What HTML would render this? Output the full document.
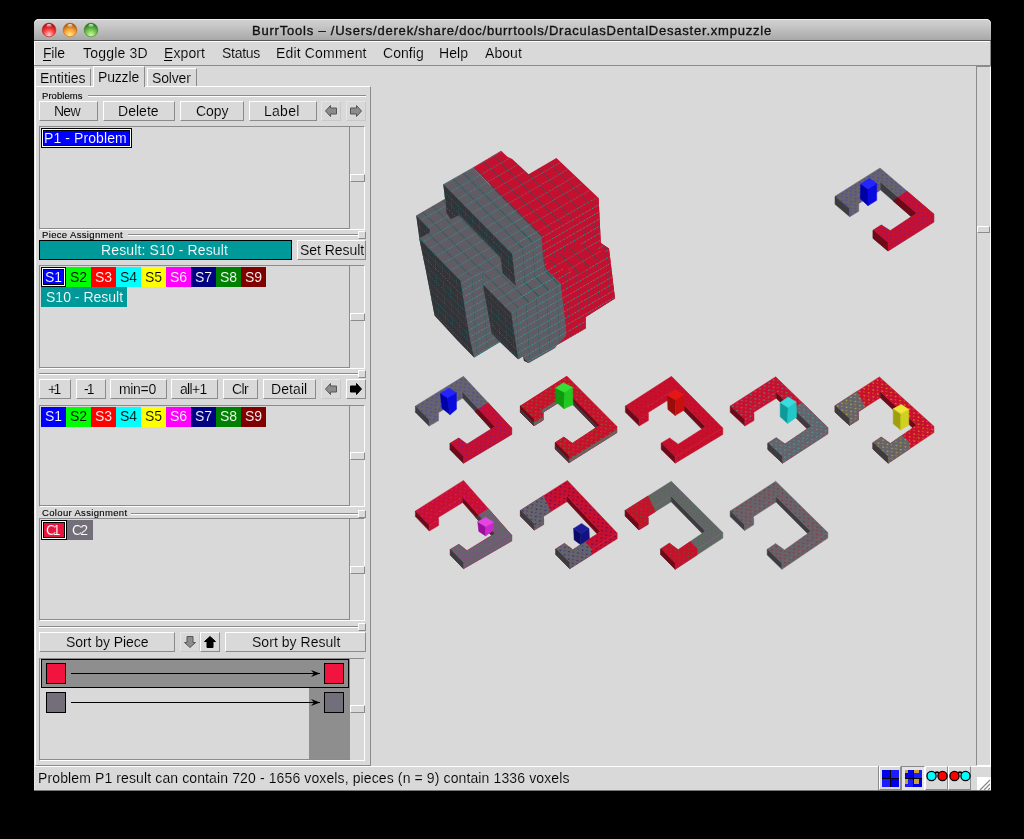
<!DOCTYPE html>
<html><head><meta charset="utf-8"><style>
html,body{margin:0;padding:0;}
body{width:1024px;height:839px;background:#000;position:relative;overflow:hidden;font-family:"Liberation Sans",sans-serif;}
body div{position:absolute;will-change:transform;}
svg{position:absolute;}
</style></head><body>
<div style="left:34px;top:19px;width:957px;height:772px;background:#d9d9d9;border-radius:5px 5px 0 0;overflow:hidden"></div>
<div style="left:34px;top:19px;width:957px;height:21px;background:linear-gradient(#d2d2d2,#c6c6c6 35%,#a8a8a8);border-radius:5px 5px 0 0;box-shadow:inset 0 1px 0 #ebebeb"></div>
<div style="left:34px;top:40px;width:957px;height:1px;background:#555"></div>
<svg style="left:41px;top:22px" width="16" height="16" viewBox="-8 -8 16 16">
<defs><radialGradient id="tl0" cx="50%" cy="85%" r="75%"><stop offset="0" stop-color="#ffd0d0"/><stop offset="0.55" stop-color="#ff3a3a"/><stop offset="1" stop-color="#a81818"/></radialGradient>
<linearGradient id="th0" x1="0" y1="0" x2="0" y2="1"><stop offset="0" stop-color="#fff" stop-opacity="0.95"/><stop offset="1" stop-color="#fff" stop-opacity="0"/></linearGradient></defs>
<circle cx="0" cy="0" r="7.6" fill="#dcdcdc" opacity="0.5"/>
<circle cx="0" cy="0" r="6.9" fill="url(#tl0)" stroke="#a81818" stroke-width="0.6"/>
<ellipse cx="0" cy="-4.3" rx="2.6" ry="1.7" fill="url(#th0)"/></svg>
<svg style="left:62px;top:22px" width="16" height="16" viewBox="-8 -8 16 16">
<defs><radialGradient id="tl1" cx="50%" cy="85%" r="75%"><stop offset="0" stop-color="#ffea90"/><stop offset="0.55" stop-color="#f8a236"/><stop offset="1" stop-color="#b05c12"/></radialGradient>
<linearGradient id="th1" x1="0" y1="0" x2="0" y2="1"><stop offset="0" stop-color="#fff" stop-opacity="0.95"/><stop offset="1" stop-color="#fff" stop-opacity="0"/></linearGradient></defs>
<circle cx="0" cy="0" r="7.6" fill="#dcdcdc" opacity="0.5"/>
<circle cx="0" cy="0" r="6.9" fill="url(#tl1)" stroke="#b05c12" stroke-width="0.6"/>
<ellipse cx="0" cy="-4.3" rx="2.6" ry="1.7" fill="url(#th1)"/></svg>
<svg style="left:83px;top:22px" width="16" height="16" viewBox="-8 -8 16 16">
<defs><radialGradient id="tl2" cx="50%" cy="85%" r="75%"><stop offset="0" stop-color="#d4f4a8"/><stop offset="0.55" stop-color="#6cc04c"/><stop offset="1" stop-color="#2e7e1e"/></radialGradient>
<linearGradient id="th2" x1="0" y1="0" x2="0" y2="1"><stop offset="0" stop-color="#fff" stop-opacity="0.95"/><stop offset="1" stop-color="#fff" stop-opacity="0"/></linearGradient></defs>
<circle cx="0" cy="0" r="7.6" fill="#dcdcdc" opacity="0.5"/>
<circle cx="0" cy="0" r="6.9" fill="url(#tl2)" stroke="#2e7e1e" stroke-width="0.6"/>
<ellipse cx="0" cy="-4.3" rx="2.6" ry="1.7" fill="url(#th2)"/></svg>
<div style="left:252.00px;top:24.00px;font-size:13px;line-height:13px;color:#111;white-space:pre;letter-spacing:0.786px;font-family:'Liberation Sans';-webkit-text-stroke:0.35px #111">BurrTools – /Users/derek/share/doc/burrtools/DraculasDentalDesaster.xmpuzzle</div>
<div style="left:34px;top:41px;width:957px;height:1px;background:#fff"></div>
<div style="left:34px;top:65px;width:957px;height:1px;background:#8b8b8b"></div>
<div style="left:990px;top:41px;width:1px;height:25px;background:#8b8b8b"></div>
<div style="left:34px;top:41px;width:1px;height:24px;background:#fff"></div>
<div style="left:34px;top:66px;width:1px;height:724px;background:#e6e6e6"></div>
<div style="left:42.80px;top:46.15px;font-size:14px;line-height:14px;color:#000;white-space:pre;letter-spacing:-0.191px;font-family:'Liberation Sans';;-webkit-text-stroke:0.14px #d9d9d9">File</div>
<div style="left:82.70px;top:46.15px;font-size:14px;line-height:14px;color:#000;white-space:pre;letter-spacing:0.209px;font-family:'Liberation Sans';;-webkit-text-stroke:0.14px #d9d9d9">Toggle 3D</div>
<div style="left:163.50px;top:46.15px;font-size:14px;line-height:14px;color:#000;white-space:pre;letter-spacing:0.086px;font-family:'Liberation Sans';;-webkit-text-stroke:0.14px #d9d9d9">Export</div>
<div style="left:221.70px;top:46.15px;font-size:14px;line-height:14px;color:#000;white-space:pre;letter-spacing:-0.278px;font-family:'Liberation Sans';;-webkit-text-stroke:0.14px #d9d9d9">Status</div>
<div style="left:276.40px;top:46.15px;font-size:14px;line-height:14px;color:#000;white-space:pre;letter-spacing:0.163px;font-family:'Liberation Sans';;-webkit-text-stroke:0.14px #d9d9d9">Edit Comment</div>
<div style="left:383.40px;top:46.15px;font-size:14px;line-height:14px;color:#000;white-space:pre;letter-spacing:0.063px;font-family:'Liberation Sans';;-webkit-text-stroke:0.14px #d9d9d9">Config</div>
<div style="left:439.00px;top:46.15px;font-size:14px;line-height:14px;color:#000;white-space:pre;letter-spacing:0.098px;font-family:'Liberation Sans';;-webkit-text-stroke:0.14px #d9d9d9">Help</div>
<div style="left:484.90px;top:46.15px;font-size:14px;line-height:14px;color:#000;white-space:pre;letter-spacing:0.051px;font-family:'Liberation Sans';;-webkit-text-stroke:0.14px #d9d9d9">About</div>
<div style="left:43px;top:60px;width:8px;height:1px;background:#000"></div>
<div style="left:164px;top:60px;width:8px;height:1px;background:#000"></div>
<div style="left:35px;top:86px;width:336px;height:680px;box-sizing:border-box;border-top:1px solid #fff;border-left:1px solid #fff;border-right:1px solid #8b8b8b;border-bottom:1px solid #8b8b8b"></div>
<div style="left:35px;top:68px;width:56px;height:18px;box-sizing:border-box;border-top:1px solid #fff;border-left:1px solid #fff;border-right:1px solid #8b8b8b"></div>
<div style="left:93px;top:66px;width:52px;height:21px;background:#d9d9d9;box-sizing:border-box;border-top:1px solid #fff;border-left:1px solid #fff;border-right:1px solid #8b8b8b"></div>
<div style="left:147px;top:68px;width:50px;height:18px;box-sizing:border-box;border-top:1px solid #fff;border-left:1px solid #fff;border-right:1px solid #8b8b8b"></div>
<div style="left:39.80px;top:70.55px;font-size:14px;line-height:14px;color:#000;white-space:pre;letter-spacing:-0.059px;font-family:'Liberation Sans';;-webkit-text-stroke:0.14px #d9d9d9">Entities</div>
<div style="left:97.60px;top:69.75px;font-size:14px;line-height:14px;color:#000;white-space:pre;letter-spacing:-0.167px;font-family:'Liberation Sans';;-webkit-text-stroke:0.14px #d9d9d9">Puzzle</div>
<div style="left:152.30px;top:70.55px;font-size:14px;line-height:14px;color:#000;white-space:pre;letter-spacing:-0.164px;font-family:'Liberation Sans';;-webkit-text-stroke:0.14px #d9d9d9">Solver</div>
<div style="left:42.00px;top:91.26px;font-size:9.5px;line-height:9.5px;color:#000;white-space:pre;letter-spacing:0.061px;font-family:'Liberation Sans';-webkit-text-stroke:0.12px #000">Problems</div>
<div style="left:88px;top:95px;width:278px;height:1px;background:#8b8b8b"></div>
<div style="left:88px;top:96px;width:278px;height:1px;background:#fff"></div>
<div style="left:39px;top:101px;width:59px;height:20px;background:#d9d9d9;box-sizing:border-box;border-top:1px solid #fff;border-left:1px solid #fff;border-right:1px solid #8b8b8b;border-bottom:1px solid #8b8b8b"></div>
<div style="left:53.60px;top:104.15px;font-size:14px;line-height:14px;color:#000;white-space:pre;letter-spacing:-0.748px;font-family:'Liberation Sans';;-webkit-text-stroke:0.14px #d9d9d9">New</div>
<div style="left:103px;top:101px;width:72px;height:20px;background:#d9d9d9;box-sizing:border-box;border-top:1px solid #fff;border-left:1px solid #fff;border-right:1px solid #8b8b8b;border-bottom:1px solid #8b8b8b"></div>
<div style="left:117.50px;top:104.15px;font-size:14px;line-height:14px;color:#000;white-space:pre;letter-spacing:0.023px;font-family:'Liberation Sans';;-webkit-text-stroke:0.14px #d9d9d9">Delete</div>
<div style="left:180px;top:101px;width:64px;height:20px;background:#d9d9d9;box-sizing:border-box;border-top:1px solid #fff;border-left:1px solid #fff;border-right:1px solid #8b8b8b;border-bottom:1px solid #8b8b8b"></div>
<div style="left:195.60px;top:104.15px;font-size:14px;line-height:14px;color:#000;white-space:pre;letter-spacing:-0.094px;font-family:'Liberation Sans';;-webkit-text-stroke:0.14px #d9d9d9">Copy</div>
<div style="left:249px;top:101px;width:68px;height:20px;background:#d9d9d9;box-sizing:border-box;border-top:1px solid #fff;border-left:1px solid #fff;border-right:1px solid #8b8b8b;border-bottom:1px solid #8b8b8b"></div>
<div style="left:264.40px;top:104.15px;font-size:14px;line-height:14px;color:#000;white-space:pre;letter-spacing:0.264px;font-family:'Liberation Sans';;-webkit-text-stroke:0.14px #d9d9d9">Label</div>
<div style="left:321px;top:101px;width:20px;height:20px;background:#d9d9d9;box-sizing:border-box;border-top:1px solid #e6e6e6;border-left:1px solid #e6e6e6;border-right:1px solid #c8c8c8;border-bottom:1px solid #c8c8c8"></div>
<svg style="left:323.0px;top:103.0px" width="16" height="16" viewBox="-8 -8 16 16"><polygon points="5.5,-3 -0.5,-3 -0.5,-5.5 -5.5,0 -0.5,5.5 -0.5,3 5.5,3" fill="#8c8c8c" stroke="#555" stroke-width="1" stroke-linejoin="miter"/></svg>
<div style="left:346px;top:101px;width:20px;height:20px;background:#d9d9d9;box-sizing:border-box;border-top:1px solid #e6e6e6;border-left:1px solid #e6e6e6;border-right:1px solid #c8c8c8;border-bottom:1px solid #c8c8c8"></div>
<svg style="left:348.0px;top:103.0px" width="16" height="16" viewBox="-8 -8 16 16"><polygon points="-5.5,-3 0.5,-3 0.5,-5.5 5.5,0 0.5,5.5 0.5,3 -5.5,3" fill="#8c8c8c" stroke="#555" stroke-width="1" stroke-linejoin="miter"/></svg>
<div style="left:39px;top:126px;width:326px;height:104px;background:#d9d9d9;box-sizing:border-box;border-top:1px solid #8b8b8b;border-left:1px solid #8b8b8b;border-right:1px solid #fff;border-bottom:1px solid #fff"></div>
<div style="left:349px;top:127px;width:1px;height:102px;background:#8b8b8b"></div>
<div style="left:40px;top:228px;width:310px;height:1px;background:#8b8b8b"></div>
<div style="left:350px;top:174px;width:15px;height:8px;background:#d9d9d9;box-sizing:border-box;border-top:1px solid #fff;border-left:1px solid #fff;border-right:1px solid #8b8b8b;border-bottom:1px solid #8b8b8b"></div>
<div style="left:41px;top:128px;width:91px;height:20px;box-sizing:border-box;background:#0000ff;border:1px solid #000;box-shadow:inset 0 0 0 1px #fff, inset 0 0 0 2px #000"></div>
<div style="left:44.30px;top:130.85px;font-size:14px;line-height:14px;color:#fff;white-space:pre;letter-spacing:0.088px;font-family:'Liberation Sans';;-webkit-text-stroke:0.14px #0000ff">P1 - Problem</div>
<div style="left:42.00px;top:230.26px;font-size:9.5px;line-height:9.5px;color:#000;white-space:pre;letter-spacing:0.347px;font-family:'Liberation Sans';-webkit-text-stroke:0.12px #000">Piece Assignment</div>
<div style="left:128px;top:234px;width:231px;height:1px;background:#8b8b8b"></div>
<div style="left:128px;top:235px;width:231px;height:1px;background:#fff"></div>
<div style="left:358px;top:231px;width:8px;height:8px;background:#d9d9d9;box-sizing:border-box;border-top:1px solid #fff;border-left:1px solid #fff;border-right:1px solid #8b8b8b;border-bottom:1px solid #8b8b8b"></div>
<div style="left:39px;top:240px;width:253px;height:20px;box-sizing:border-box;background:#009999;border:1px solid #000"></div>
<div style="left:101.00px;top:242.75px;font-size:14px;line-height:14px;color:#fff;white-space:pre;letter-spacing:0.126px;font-family:'Liberation Sans';;-webkit-text-stroke:0.14px #009999">Result: S10 - Result</div>
<div style="left:297px;top:240px;width:69px;height:20px;background:#d9d9d9;box-sizing:border-box;border-top:1px solid #fff;border-left:1px solid #fff;border-right:1px solid #8b8b8b;border-bottom:1px solid #8b8b8b"></div>
<div style="left:299.70px;top:242.75px;font-size:14px;line-height:14px;color:#000;white-space:pre;letter-spacing:-0.044px;font-family:'Liberation Sans';;-webkit-text-stroke:0.14px #d9d9d9">Set Result</div>
<div style="left:39px;top:265px;width:326px;height:104px;background:#d9d9d9;box-sizing:border-box;border-top:1px solid #8b8b8b;border-left:1px solid #8b8b8b;border-right:1px solid #fff;border-bottom:1px solid #fff"></div>
<div style="left:349px;top:266px;width:1px;height:102px;background:#8b8b8b"></div>
<div style="left:40px;top:367px;width:310px;height:1px;background:#8b8b8b"></div>
<div style="left:350px;top:313px;width:15px;height:8px;background:#d9d9d9;box-sizing:border-box;border-top:1px solid #fff;border-left:1px solid #fff;border-right:1px solid #8b8b8b;border-bottom:1px solid #8b8b8b"></div>
<div style="left:41px;top:267px;width:25px;height:20px;background:#0000ff"></div>
<div style="left:45.33px;top:269.75px;font-size:14px;line-height:14px;color:#fff;white-space:pre;letter-spacing:0.000px;font-family:'Liberation Sans';;-webkit-text-stroke:0.14px #0000ff">S1</div>
<div style="left:66px;top:267px;width:25px;height:20px;background:#00ff00"></div>
<div style="left:70.33px;top:269.75px;font-size:14px;line-height:14px;color:#000;white-space:pre;letter-spacing:0.000px;font-family:'Liberation Sans';;-webkit-text-stroke:0.14px #00ff00">S2</div>
<div style="left:91px;top:267px;width:25px;height:20px;background:#ff0000"></div>
<div style="left:95.33px;top:269.75px;font-size:14px;line-height:14px;color:#fff;white-space:pre;letter-spacing:0.000px;font-family:'Liberation Sans';;-webkit-text-stroke:0.14px #ff0000">S3</div>
<div style="left:116px;top:267px;width:25px;height:20px;background:#00ffff"></div>
<div style="left:120.33px;top:269.75px;font-size:14px;line-height:14px;color:#000;white-space:pre;letter-spacing:0.000px;font-family:'Liberation Sans';;-webkit-text-stroke:0.14px #00ffff">S4</div>
<div style="left:141px;top:267px;width:25px;height:20px;background:#ffff00"></div>
<div style="left:145.33px;top:269.75px;font-size:14px;line-height:14px;color:#000;white-space:pre;letter-spacing:0.000px;font-family:'Liberation Sans';;-webkit-text-stroke:0.14px #ffff00">S5</div>
<div style="left:166px;top:267px;width:25px;height:20px;background:#ff00ff"></div>
<div style="left:170.33px;top:269.75px;font-size:14px;line-height:14px;color:#fff;white-space:pre;letter-spacing:0.000px;font-family:'Liberation Sans';;-webkit-text-stroke:0.14px #ff00ff">S6</div>
<div style="left:191px;top:267px;width:25px;height:20px;background:#000080"></div>
<div style="left:195.33px;top:269.75px;font-size:14px;line-height:14px;color:#fff;white-space:pre;letter-spacing:0.000px;font-family:'Liberation Sans';;-webkit-text-stroke:0.14px #000080">S7</div>
<div style="left:216px;top:267px;width:25px;height:20px;background:#008000"></div>
<div style="left:220.33px;top:269.75px;font-size:14px;line-height:14px;color:#fff;white-space:pre;letter-spacing:0.000px;font-family:'Liberation Sans';;-webkit-text-stroke:0.14px #008000">S8</div>
<div style="left:241px;top:267px;width:25px;height:20px;background:#800000"></div>
<div style="left:245.33px;top:269.75px;font-size:14px;line-height:14px;color:#fff;white-space:pre;letter-spacing:0.000px;font-family:'Liberation Sans';;-webkit-text-stroke:0.14px #800000">S9</div>
<div style="left:41px;top:267px;width:25px;height:20px;box-sizing:border-box;border:1px solid #000;box-shadow:inset 0 0 0 1px #fff, inset 0 0 0 2px #000"></div>
<div style="left:41px;top:287px;width:86px;height:20px;background:#009999"></div>
<div style="left:45.80px;top:289.85px;font-size:14px;line-height:14px;color:#fff;white-space:pre;letter-spacing:0.005px;font-family:'Liberation Sans';;-webkit-text-stroke:0.14px #009999">S10 - Result</div>
<div style="left:39px;top:373px;width:320px;height:1px;background:#8b8b8b"></div>
<div style="left:39px;top:374px;width:320px;height:1px;background:#fff"></div>
<div style="left:358px;top:370px;width:8px;height:8px;background:#d9d9d9;box-sizing:border-box;border-top:1px solid #fff;border-left:1px solid #fff;border-right:1px solid #8b8b8b;border-bottom:1px solid #8b8b8b"></div>
<div style="left:39px;top:379px;width:32px;height:20px;background:#d9d9d9;box-sizing:border-box;border-top:1px solid #fff;border-left:1px solid #fff;border-right:1px solid #8b8b8b;border-bottom:1px solid #8b8b8b"></div>
<div style="left:47.60px;top:381.55px;font-size:14px;line-height:14px;color:#000;white-space:pre;letter-spacing:-2.576px;font-family:'Liberation Sans';;-webkit-text-stroke:0.14px #d9d9d9">+1</div>
<div style="left:76px;top:379px;width:30px;height:20px;background:#d9d9d9;box-sizing:border-box;border-top:1px solid #fff;border-left:1px solid #fff;border-right:1px solid #8b8b8b;border-bottom:1px solid #8b8b8b"></div>
<div style="left:84.10px;top:381.55px;font-size:14px;line-height:14px;color:#000;white-space:pre;letter-spacing:-1.862px;font-family:'Liberation Sans';;-webkit-text-stroke:0.14px #d9d9d9">-1</div>
<div style="left:110px;top:379px;width:57px;height:20px;background:#d9d9d9;box-sizing:border-box;border-top:1px solid #fff;border-left:1px solid #fff;border-right:1px solid #8b8b8b;border-bottom:1px solid #8b8b8b"></div>
<div style="left:118.50px;top:381.55px;font-size:14px;line-height:14px;color:#000;white-space:pre;letter-spacing:-0.334px;font-family:'Liberation Sans';;-webkit-text-stroke:0.14px #d9d9d9">min=0</div>
<div style="left:171px;top:379px;width:47px;height:20px;background:#d9d9d9;box-sizing:border-box;border-top:1px solid #fff;border-left:1px solid #fff;border-right:1px solid #8b8b8b;border-bottom:1px solid #8b8b8b"></div>
<div style="left:179.60px;top:381.55px;font-size:14px;line-height:14px;color:#000;white-space:pre;letter-spacing:-0.696px;font-family:'Liberation Sans';;-webkit-text-stroke:0.14px #d9d9d9">all+1</div>
<div style="left:223px;top:379px;width:35px;height:20px;background:#d9d9d9;box-sizing:border-box;border-top:1px solid #fff;border-left:1px solid #fff;border-right:1px solid #8b8b8b;border-bottom:1px solid #8b8b8b"></div>
<div style="left:231.60px;top:381.55px;font-size:14px;line-height:14px;color:#000;white-space:pre;letter-spacing:-0.660px;font-family:'Liberation Sans';;-webkit-text-stroke:0.14px #d9d9d9">Clr</div>
<div style="left:263px;top:379px;width:53px;height:20px;background:#d9d9d9;box-sizing:border-box;border-top:1px solid #fff;border-left:1px solid #fff;border-right:1px solid #8b8b8b;border-bottom:1px solid #8b8b8b"></div>
<div style="left:270.70px;top:381.55px;font-size:14px;line-height:14px;color:#000;white-space:pre;letter-spacing:0.083px;font-family:'Liberation Sans';;-webkit-text-stroke:0.14px #d9d9d9">Detail</div>
<div style="left:321px;top:379px;width:20px;height:20px;background:#d9d9d9;box-sizing:border-box;border-top:1px solid #e6e6e6;border-left:1px solid #e6e6e6;border-right:1px solid #c8c8c8;border-bottom:1px solid #c8c8c8"></div>
<svg style="left:323.0px;top:381.0px" width="16" height="16" viewBox="-8 -8 16 16"><polygon points="5.5,-3 -0.5,-3 -0.5,-5.5 -5.5,0 -0.5,5.5 -0.5,3 5.5,3" fill="#8c8c8c" stroke="#555" stroke-width="1" stroke-linejoin="miter"/></svg>
<div style="left:346px;top:379px;width:20px;height:20px;background:#d9d9d9;box-sizing:border-box;border-top:1px solid #fff;border-left:1px solid #fff;border-right:1px solid #8b8b8b;border-bottom:1px solid #8b8b8b"></div>
<svg style="left:348.0px;top:381.0px" width="16" height="16" viewBox="-8 -8 16 16"><polygon points="-5.5,-3 0.5,-3 0.5,-5.5 5.5,0 0.5,5.5 0.5,3 -5.5,3" fill="#000" stroke="#000" stroke-width="1" stroke-linejoin="miter"/></svg>
<div style="left:39px;top:405px;width:326px;height:102px;background:#d9d9d9;box-sizing:border-box;border-top:1px solid #8b8b8b;border-left:1px solid #8b8b8b;border-right:1px solid #fff;border-bottom:1px solid #fff"></div>
<div style="left:349px;top:406px;width:1px;height:100px;background:#8b8b8b"></div>
<div style="left:40px;top:505px;width:310px;height:1px;background:#8b8b8b"></div>
<div style="left:350px;top:452px;width:15px;height:8px;background:#d9d9d9;box-sizing:border-box;border-top:1px solid #fff;border-left:1px solid #fff;border-right:1px solid #8b8b8b;border-bottom:1px solid #8b8b8b"></div>
<div style="left:41px;top:407px;width:25px;height:20px;background:#0000ff"></div>
<div style="left:45.33px;top:409.15px;font-size:14px;line-height:14px;color:#fff;white-space:pre;letter-spacing:0.000px;font-family:'Liberation Sans';;-webkit-text-stroke:0.14px #0000ff">S1</div>
<div style="left:66px;top:407px;width:25px;height:20px;background:#00ff00"></div>
<div style="left:70.33px;top:409.15px;font-size:14px;line-height:14px;color:#000;white-space:pre;letter-spacing:0.000px;font-family:'Liberation Sans';;-webkit-text-stroke:0.14px #00ff00">S2</div>
<div style="left:91px;top:407px;width:25px;height:20px;background:#ff0000"></div>
<div style="left:95.33px;top:409.15px;font-size:14px;line-height:14px;color:#fff;white-space:pre;letter-spacing:0.000px;font-family:'Liberation Sans';;-webkit-text-stroke:0.14px #ff0000">S3</div>
<div style="left:116px;top:407px;width:25px;height:20px;background:#00ffff"></div>
<div style="left:120.33px;top:409.15px;font-size:14px;line-height:14px;color:#000;white-space:pre;letter-spacing:0.000px;font-family:'Liberation Sans';;-webkit-text-stroke:0.14px #00ffff">S4</div>
<div style="left:141px;top:407px;width:25px;height:20px;background:#ffff00"></div>
<div style="left:145.33px;top:409.15px;font-size:14px;line-height:14px;color:#000;white-space:pre;letter-spacing:0.000px;font-family:'Liberation Sans';;-webkit-text-stroke:0.14px #ffff00">S5</div>
<div style="left:166px;top:407px;width:25px;height:20px;background:#ff00ff"></div>
<div style="left:170.33px;top:409.15px;font-size:14px;line-height:14px;color:#fff;white-space:pre;letter-spacing:0.000px;font-family:'Liberation Sans';;-webkit-text-stroke:0.14px #ff00ff">S6</div>
<div style="left:191px;top:407px;width:25px;height:20px;background:#000080"></div>
<div style="left:195.33px;top:409.15px;font-size:14px;line-height:14px;color:#fff;white-space:pre;letter-spacing:0.000px;font-family:'Liberation Sans';;-webkit-text-stroke:0.14px #000080">S7</div>
<div style="left:216px;top:407px;width:25px;height:20px;background:#008000"></div>
<div style="left:220.33px;top:409.15px;font-size:14px;line-height:14px;color:#fff;white-space:pre;letter-spacing:0.000px;font-family:'Liberation Sans';;-webkit-text-stroke:0.14px #008000">S8</div>
<div style="left:241px;top:407px;width:25px;height:20px;background:#800000"></div>
<div style="left:245.33px;top:409.15px;font-size:14px;line-height:14px;color:#fff;white-space:pre;letter-spacing:0.000px;font-family:'Liberation Sans';;-webkit-text-stroke:0.14px #800000">S9</div>
<div style="left:42.00px;top:508.26px;font-size:9.5px;line-height:9.5px;color:#000;white-space:pre;letter-spacing:0.336px;font-family:'Liberation Sans';-webkit-text-stroke:0.12px #000">Colour Assignment</div>
<div style="left:131px;top:513px;width:228px;height:1px;background:#8b8b8b"></div>
<div style="left:131px;top:514px;width:228px;height:1px;background:#fff"></div>
<div style="left:358px;top:510px;width:8px;height:8px;background:#d9d9d9;box-sizing:border-box;border-top:1px solid #fff;border-left:1px solid #fff;border-right:1px solid #8b8b8b;border-bottom:1px solid #8b8b8b"></div>
<div style="left:39px;top:518px;width:326px;height:103px;background:#d9d9d9;box-sizing:border-box;border-top:1px solid #8b8b8b;border-left:1px solid #8b8b8b;border-right:1px solid #fff;border-bottom:1px solid #fff"></div>
<div style="left:349px;top:519px;width:1px;height:101px;background:#8b8b8b"></div>
<div style="left:40px;top:619px;width:310px;height:1px;background:#8b8b8b"></div>
<div style="left:350px;top:566px;width:15px;height:8px;background:#d9d9d9;box-sizing:border-box;border-top:1px solid #fff;border-left:1px solid #fff;border-right:1px solid #8b8b8b;border-bottom:1px solid #8b8b8b"></div>
<div style="left:41px;top:520px;width:26px;height:20px;background:#e8163f"></div>
<div style="left:41px;top:520px;width:26px;height:20px;box-sizing:border-box;border:1px solid #000;box-shadow:inset 0 0 0 1px #fff, inset 0 0 0 2px #000"></div>
<div style="left:67px;top:520px;width:26px;height:20px;background:#736f7a"></div>
<div style="left:45.70px;top:522.75px;font-size:14px;line-height:14px;color:#fff;white-space:pre;letter-spacing:-3.410px;font-family:'Liberation Sans';;-webkit-text-stroke:0.14px #e8163f">C1</div>
<div style="left:71.90px;top:522.75px;font-size:14px;line-height:14px;color:#fff;white-space:pre;letter-spacing:-1.810px;font-family:'Liberation Sans';;-webkit-text-stroke:0.14px #736f7a">C2</div>
<div style="left:39px;top:626px;width:320px;height:1px;background:#8b8b8b"></div>
<div style="left:39px;top:627px;width:320px;height:1px;background:#fff"></div>
<div style="left:358px;top:623px;width:8px;height:8px;background:#d9d9d9;box-sizing:border-box;border-top:1px solid #fff;border-left:1px solid #fff;border-right:1px solid #8b8b8b;border-bottom:1px solid #8b8b8b"></div>
<div style="left:39px;top:632px;width:136px;height:20px;background:#d9d9d9;box-sizing:border-box;border-top:1px solid #fff;border-left:1px solid #fff;border-right:1px solid #8b8b8b;border-bottom:1px solid #8b8b8b"></div>
<div style="left:65.50px;top:635.15px;font-size:14px;line-height:14px;color:#000;white-space:pre;letter-spacing:-0.065px;font-family:'Liberation Sans';;-webkit-text-stroke:0.14px #d9d9d9">Sort by Piece</div>
<div style="left:180px;top:632px;width:20px;height:20px;background:#d9d9d9;box-sizing:border-box;border-top:1px solid #e6e6e6;border-left:1px solid #e6e6e6;border-right:1px solid #c8c8c8;border-bottom:1px solid #c8c8c8"></div>
<svg style="left:182.0px;top:634.0px" width="16" height="16" viewBox="-8 -8 16 16"><polygon points="-3,-5.5 -3,0.5 -5.5,0.5 0,5.5 5.5,0.5 3,0.5 3,-5.5" fill="#8c8c8c" stroke="#555" stroke-width="1" stroke-linejoin="miter"/></svg>
<div style="left:200px;top:632px;width:20px;height:20px;background:#d9d9d9;box-sizing:border-box;border-top:1px solid #fff;border-left:1px solid #fff;border-right:1px solid #8b8b8b;border-bottom:1px solid #8b8b8b"></div>
<svg style="left:202.0px;top:634.0px" width="16" height="16" viewBox="-8 -8 16 16"><polygon points="-3,5.5 -3,-0.5 -5.5,-0.5 0,-5.5 5.5,-0.5 3,-0.5 3,5.5" fill="#000" stroke="#000" stroke-width="1" stroke-linejoin="miter"/></svg>
<div style="left:225px;top:632px;width:141px;height:20px;background:#d9d9d9;box-sizing:border-box;border-top:1px solid #fff;border-left:1px solid #fff;border-right:1px solid #8b8b8b;border-bottom:1px solid #8b8b8b"></div>
<div style="left:251.50px;top:635.15px;font-size:14px;line-height:14px;color:#000;white-space:pre;letter-spacing:0.036px;font-family:'Liberation Sans';;-webkit-text-stroke:0.14px #d9d9d9">Sort by Result</div>
<div style="left:39px;top:658px;width:326px;height:103px;background:#d9d9d9;box-sizing:border-box;border-top:1px solid #8b8b8b;border-left:1px solid #8b8b8b;border-right:1px solid #fff;border-bottom:1px solid #fff"></div>
<div style="left:349px;top:659px;width:1px;height:101px;background:#8b8b8b"></div>
<div style="left:40px;top:759px;width:310px;height:1px;background:#8b8b8b"></div>
<div style="left:350px;top:705px;width:15px;height:8px;background:#d9d9d9;box-sizing:border-box;border-top:1px solid #fff;border-left:1px solid #fff;border-right:1px solid #8b8b8b;border-bottom:1px solid #8b8b8b"></div>
<div style="left:309px;top:688px;width:41px;height:71px;background:#8e8e8e"></div>
<div style="left:41px;top:659px;width:308px;height:29px;box-sizing:border-box;background:#8e8e8e;border:1px solid #000"></div>
<div style="left:46px;top:663px;width:20px;height:21px;box-sizing:border-box;background:#f0143f;border:1px solid #000"></div>
<div style="left:324px;top:663px;width:20px;height:21px;box-sizing:border-box;background:#f0143f;border:1px solid #000"></div>
<div style="left:71px;top:673px;width:249px;height:1px;background:#000"></div>
<svg style="left:308px;top:668px" width="14" height="11" viewBox="0 0 14 11"><path d="M3 2 L12 5.5 L3 9 L6 5.5 Z" fill="#000"/></svg>
<div style="left:46px;top:692px;width:20px;height:21px;box-sizing:border-box;background:#736f7a;border:1px solid #000"></div>
<div style="left:324px;top:692px;width:20px;height:21px;box-sizing:border-box;background:#736f7a;border:1px solid #000"></div>
<div style="left:71px;top:702px;width:249px;height:1px;background:#000"></div>
<svg style="left:308px;top:697px" width="14" height="11" viewBox="0 0 14 11"><path d="M3 2 L12 5.5 L3 9 L6 5.5 Z" fill="#000"/></svg>
<div style="left:34px;top:766px;width:957px;height:1px;background:#fff"></div>
<div style="left:37.60px;top:771.15px;font-size:14px;line-height:14px;color:#000;white-space:pre;letter-spacing:0.117px;font-family:'Liberation Sans';;-webkit-text-stroke:0.14px #d9d9d9">Problem P1 result can contain 720 - 1656 voxels, pieces (n = 9) contain 1336 voxels</div>
<div style="left:976px;top:66px;width:15px;height:700px;background:#d9d9d9;box-sizing:border-box;border-top:1px solid #8b8b8b;border-left:1px solid #8b8b8b;border-right:1px solid #fff;border-bottom:1px solid #fff"></div>
<div style="left:977px;top:226px;width:13px;height:7px;background:#d9d9d9;box-sizing:border-box;border-top:1px solid #fff;border-left:1px solid #fff;border-right:1px solid #8b8b8b;border-bottom:1px solid #8b8b8b"></div>
<div style="left:878px;top:766px;width:1px;height:24px;background:#8b8b8b"></div>
<div style="left:879px;top:766px;width:22px;height:24px;background:#d9d9d9;box-sizing:border-box;border-top:1px solid #fff;border-left:1px solid #fff;border-right:1px solid #8b8b8b;border-bottom:1px solid #8b8b8b"></div>
<div style="left:901px;top:766px;width:24px;height:25px;background:#d9d9d9;box-sizing:border-box;border-top:1px solid #8b8b8b;border-left:1px solid #8b8b8b;border-right:1px solid #fff;border-bottom:1px solid #fff"></div>
<div style="left:902px;top:767px;width:22px;height:23px;background:#e4e4e4"></div>
<div style="left:925px;top:766px;width:23px;height:24px;background:#d9d9d9;box-sizing:border-box;border-top:1px solid #fff;border-left:1px solid #fff;border-right:1px solid #8b8b8b;border-bottom:1px solid #8b8b8b"></div>
<div style="left:948px;top:766px;width:23px;height:24px;background:#d9d9d9;box-sizing:border-box;border-top:1px solid #fff;border-left:1px solid #fff;border-right:1px solid #8b8b8b;border-bottom:1px solid #8b8b8b"></div>
<svg style="left:882px;top:770px" width="17" height="17" viewBox="0 0 17 17" shape-rendering="crispEdges">
<rect x="0" y="0" width="8" height="8" fill="#0000e6"/><rect x="9" y="0" width="8" height="8" fill="#1c1cff"/>
<rect x="0" y="9" width="8" height="8" fill="#1c1cff"/><rect x="9" y="9" width="8" height="8" fill="#0000e6"/>
<rect x="8" y="0" width="1" height="17" fill="#000"/><rect x="0" y="8" width="17" height="1" fill="#000"/></svg>
<svg style="left:905px;top:770px" width="17" height="17" viewBox="0 0 17 17" shape-rendering="crispEdges">
<rect x="0" y="0" width="8" height="8" fill="#0000e6"/><rect x="9" y="0" width="8" height="8" fill="#1c1cff"/>
<rect x="0" y="9" width="8" height="8" fill="#1c1cff"/><rect x="9" y="9" width="8" height="8" fill="#0000e6"/>
<rect x="0" y="0" width="3" height="3" fill="#c8a040"/><rect x="9" y="0" width="5" height="3" fill="#c8a040"/>
<rect x="0" y="9" width="3" height="5" fill="#c8a040"/><rect x="9" y="9" width="5" height="5" fill="#c8a040"/>
<rect x="8" y="0" width="1" height="17" fill="#000"/><rect x="0" y="8" width="17" height="1" fill="#000"/></svg>
<svg style="left:925.5px;top:770px" width="22" height="12" viewBox="0 0 22 12">
<path d="M8 3.6 Q11 0.8 14 3.6" stroke="#000" stroke-width="1.8" fill="none"/>
<circle cx="5.5" cy="6" r="4.6" fill="#00ffff" stroke="#000" stroke-width="1.3"/>
<circle cx="16.5" cy="6" r="4.6" fill="#ff0000" stroke="#000" stroke-width="1.3"/></svg>
<svg style="left:948.5px;top:770px" width="22" height="12" viewBox="0 0 22 12">
<path d="M8 3.6 Q11 0.8 14 3.6" stroke="#000" stroke-width="1.8" fill="none"/>
<circle cx="5.5" cy="6" r="4.6" fill="#ff0000" stroke="#000" stroke-width="1.3"/>
<circle cx="16.5" cy="6" r="4.6" fill="#00ffff" stroke="#000" stroke-width="1.3"/></svg>
<div style="left:977px;top:777px;width:14px;height:14px;background:#fff"></div>
<svg style="left:977px;top:777px" width="14" height="14" viewBox="0 0 14 14">
<path d="M3 13 L13 3 M7 13 L13 7 M11 13 L13 11" stroke="#888" stroke-width="1.2"/></svg>
<div style="left:34px;top:790px;width:957px;height:1px;background:#777"></div>
<svg style="left:0;top:0" width="1024" height="839" viewBox="0 0 1024 839"><defs><pattern id="pTop" patternUnits="userSpaceOnUse" width="10" height="10" patternTransform="matrix(1.0100 -0.5800 0.7100 0.7100 472.90 167.50)"><line x1="0" y1="0" x2="10" y2="0" stroke="#22b2b2" stroke-width="1.0955175483171864" stroke-dasharray="1.7,1.3"/><line x1="0" y1="0" x2="0" y2="10" stroke="#0a5a5a" stroke-width="0.8585984516307065"/></pattern><pattern id="pFront" patternUnits="userSpaceOnUse" width="10" height="10" patternTransform="matrix(1.0100 -0.5800 0.0450 0.7000 512.00 254.20)"><line x1="0" y1="0" x2="10" y2="0" stroke="#22b2b2" stroke-width="1.5681915166505238" stroke-dasharray="1.7,1.3"/><line x1="0" y1="0" x2="0" y2="10" stroke="#0a5a5a" stroke-width="0.8585984516307065" stroke-dasharray="2,1"/></pattern><pattern id="pDark" patternUnits="userSpaceOnUse" width="10" height="10" patternTransform="matrix(0.7100 0.7100 0.0450 0.7000 443.30 184.20)"><line x1="0" y1="0" x2="10" y2="0" stroke="#1a9090" stroke-width="1.4256286515004761" stroke-dasharray="1.6,1.6"/><line x1="0" y1="0" x2="0" y2="10" stroke="#168484" stroke-width="0.9959250439247148" stroke-dasharray="1.4,2.0"/></pattern><clipPath id="c_TR_0"><polygon points="931.2,173.5 1000.0,173.5 1000.0,300.0 909.3,300.0 909.3,229.2 901.9,222.9 894.3,216.4 889.9,202.9 898.0,197.1 906.7,190.9" fill="#000" /><polygon points="860.0,218.0 894.3,216.4 901.9,222.9 909.3,229.2 909.3,300.0 860.0,300.0" fill="#000" /></clipPath><pattern id="d_TR" patternUnits="userSpaceOnUse" width="10" height="10" patternTransform="matrix(0.4500 -0.2830 0.4483 0.3842 835.00 196.30)"><circle cx="3" cy="3" r="1.1" fill="#2020ff"/><circle cx="8" cy="7" r="1.0" fill="#2020ff" opacity="0.7"/></pattern><clipPath id="c_S1_0"><polygon points="514.6,384.1 583.4,386.4 562.9,516.3 477.9,514.2 485.8,443.3 479.3,436.4 472.5,429.4 469.6,414.8 478.4,408.8 487.8,402.4" fill="#000" /><polygon points="438.5,430.0 472.5,429.4 479.3,436.4 485.8,443.3 477.9,514.2 431.3,513.0" fill="#000" /></clipPath><pattern id="d_S1" patternUnits="userSpaceOnUse" width="10" height="10" patternTransform="matrix(0.4810 -0.2970 0.4017 0.4317 415.40 406.00)"><circle cx="3" cy="3" r="1.1" fill="#2020ff"/><circle cx="8" cy="7" r="1.0" fill="#2020ff" opacity="0.7"/></pattern><clipPath id="c_S2_0"><polygon points="479.4,356.1 526.6,356.5 543.6,392.0 549.4,404.4 556.0,418.1 551.0,433.8 474.9,432.5" fill="#000" /><polygon points="482.6,302.2 693.6,303.0 686.8,383.6 617.4,382.8 591.6,401.2 582.5,407.7 574.0,413.8 577.3,428.2 556.0,418.1 549.4,404.4 543.6,392.0 526.6,356.5 479.4,356.1" fill="#000" /><polygon points="617.4,382.8 686.8,383.6 675.4,518.7 585.7,516.5 591.2,442.1 584.3,435.3 577.3,428.2 574.0,413.8 582.5,407.7 591.6,401.2" fill="#000" /><polygon points="543.4,429.4 577.3,428.2 584.3,435.3 591.2,442.1 585.7,516.5 537.6,515.4" fill="#000" /></clipPath><pattern id="d_S2" patternUnits="userSpaceOnUse" width="10" height="10" patternTransform="matrix(0.4640 -0.2970 0.4158 0.4175 520.40 406.00)"><circle cx="3" cy="3" r="1.1" fill="#10d010"/><circle cx="8" cy="7" r="1.0" fill="#10d010" opacity="0.7"/></pattern><pattern id="d_S3" patternUnits="userSpaceOnUse" width="10" height="10" patternTransform="matrix(0.4610 -0.2970 0.4275 0.4317 625.40 406.00)"><circle cx="3" cy="3" r="1.1" fill="#9a0a10"/><circle cx="8" cy="7" r="1.0" fill="#9a0a10" opacity="0.7"/></pattern><clipPath id="c_S4_0"><polygon points="826.3,384.4 892.8,386.5 888.3,516.8 802.2,516.2 803.6,442.9 796.5,436.0 789.1,429.0 785.0,414.6 793.1,408.6 801.8,402.2" fill="#000" /><polygon points="755.1,429.9 789.1,429.0 796.5,436.0 803.6,442.9 802.2,516.2 754.3,515.8" fill="#000" /></clipPath><pattern id="d_S4" patternUnits="userSpaceOnUse" width="10" height="10" patternTransform="matrix(0.4550 -0.2920 0.4342 0.4225 730.20 406.00)"><circle cx="3" cy="3" r="1.1" fill="#10d8d8"/><circle cx="8" cy="7" r="1.0" fill="#10d8d8" opacity="0.7"/></pattern><clipPath id="c_S5_0"><polygon points="791.9,357.3 838.5,357.9 857.4,392.0 864.1,404.2 871.8,417.9 867.8,433.7 789.8,432.3" fill="#000" /><polygon points="859.8,429.2 894.2,428.1 902.0,435.2 909.6,442.3 911.2,521.7 859.8,520.6" fill="#000" /></clipPath><pattern id="d_S5" patternUnits="userSpaceOnUse" width="10" height="10" patternTransform="matrix(0.4440 -0.2880 0.4542 0.4117 835.00 405.70)"><circle cx="3" cy="3" r="1.1" fill="#e8e810"/><circle cx="8" cy="7" r="1.0" fill="#e8e810" opacity="0.7"/></pattern><clipPath id="c_S6_0"><polygon points="515.9,489.4 587.5,492.8 558.8,622.4 477.1,618.0 485.5,550.1 479.1,543.1 472.5,535.8 469.7,521.0 478.5,514.9 488.0,508.4" fill="#000" /><polygon points="438.7,535.9 472.5,535.8 479.1,543.1 485.5,550.1 477.1,618.0 433.0,615.6" fill="#000" /></clipPath><pattern id="d_S6" patternUnits="userSpaceOnUse" width="10" height="10" patternTransform="matrix(0.4810 -0.3060 0.4017 0.4575 415.40 511.00)"><circle cx="3" cy="3" r="1.1" fill="#e810e8"/><circle cx="8" cy="7" r="1.0" fill="#e810e8" opacity="0.7"/></pattern><clipPath id="c_S7_0"><polygon points="477.9,457.1 526.5,458.7 543.9,496.3 549.9,509.2 556.5,523.6 551.5,539.7 474.0,537.3" fill="#000" /><polygon points="543.8,535.1 577.9,534.4 585.0,541.7 591.8,548.8 586.2,624.5 538.2,623.1" fill="#000" /></clipPath><pattern id="d_S7" patternUnits="userSpaceOnUse" width="10" height="10" patternTransform="matrix(0.4700 -0.3000 0.4150 0.4392 520.40 510.40)"><circle cx="3" cy="3" r="1.1" fill="#000090"/><circle cx="8" cy="7" r="1.0" fill="#000090" opacity="0.7"/></pattern><clipPath id="c_S8_0"><polygon points="585.5,460.5 631.8,461.6 648.4,496.6 654.4,509.1 661.1,523.2 656.2,539.5 578.3,537.3" fill="#000" /><polygon points="648.5,534.8 683.0,534.0 690.3,541.4 697.5,548.7 694.4,631.5 642.7,629.7" fill="#000" /></clipPath><pattern id="d_S8" patternUnits="userSpaceOnUse" width="10" height="10" patternTransform="matrix(0.4610 -0.2910 0.4292 0.4267 625.20 510.40)"><circle cx="3" cy="3" r="1.1" fill="#00a000"/><circle cx="8" cy="7" r="1.0" fill="#00a000" opacity="0.7"/></pattern><pattern id="d_S9" patternUnits="userSpaceOnUse" width="10" height="10" patternTransform="matrix(0.4550 -0.2970 0.4342 0.4267 730.20 511.00)"><circle cx="3" cy="3" r="1.1" fill="#c00000"/><circle cx="8" cy="7" r="1.0" fill="#c00000" opacity="0.7"/></pattern></defs><polygon points="472.9,167.5 501.1,150.7 507.5,156.8 512.1,158.9 528.6,174.3 556.4,157.9 598.6,197.9 600.8,243.0 609.0,248.5 615.0,298.6 585.7,317.1 585.7,328.6 557.1,345.0 520.0,345.0 520.0,230.0 490.0,185.0" fill="#c4102f" /><polygon points="443.3,184.2 472.9,167.5 504.3,199.9 541.7,236.7 543.3,259.9 546.2,269.6 560.8,282.9 565.8,324.9 566.4,335.7 557.1,345.0 554.9,347.9 528.6,362.9 522.9,356.4 518.2,359.3 500.0,342.1 474.2,357.5 457.1,339.9 434.6,315.4 425.8,270.0 419.2,238.3 416.2,215.4 445.0,198.7" fill="#5f5c64" /><polygon points="472.9,167.5 501.1,150.7 507.5,156.8 512.1,158.9 528.6,174.3 556.4,157.9 598.6,197.9 600.8,243.0 609.0,248.5 615.0,298.6 585.7,317.1 585.7,328.6 557.1,345.0 520.0,345.0 520.0,230.0 490.0,185.0" fill="url(#pTop)" /><polygon points="443.3,184.2 472.9,167.5 504.3,199.9 541.7,236.7 543.3,259.9 546.2,269.6 560.8,282.9 565.8,324.9 566.4,335.7 557.1,345.0 554.9,347.9 528.6,362.9 522.9,356.4 518.2,359.3 500.0,342.1 474.2,357.5 457.1,339.9 434.6,315.4 425.8,270.0 419.2,238.3 416.2,215.4 445.0,198.7" fill="url(#pTop)" /><polygon points="460.4,280.8 482.9,267.9 482.9,284.6 491.7,333.3 500.0,342.1 474.2,357.5 470.0,339.9" fill="#5f5c64" /><polygon points="460.4,280.8 482.9,267.9 482.9,284.6 491.7,333.3 500.0,342.1 474.2,357.5 470.0,339.9" fill="url(#pFront)" /><polygon points="511.2,313.3 560.8,282.9 565.8,324.9 566.4,335.7 557.1,345.0 554.9,347.9 528.6,362.9 522.9,356.4 518.2,359.3" fill="#5f5c64" /><polygon points="511.2,313.3 560.8,282.9 565.8,324.9 566.4,335.7 557.1,345.0 554.9,347.9 528.6,362.9 522.9,356.4 518.2,359.3" fill="url(#pFront)" /><polygon points="512.0,254.2 541.7,236.7 543.3,259.9 546.2,269.6 515.8,285.8 515.4,283.3" fill="#5f5c64" /><polygon points="512.0,254.2 541.7,236.7 543.3,259.9 546.2,269.6 515.8,285.8 515.4,283.3" fill="url(#pFront)" /><polygon points="541.7,236.7 598.6,197.9 600.8,243.0 609.0,248.5 615.0,298.6 585.7,317.1 585.7,328.6 557.1,345.0 566.4,335.7 565.8,324.9 560.8,282.9 546.2,269.6 543.3,259.9" fill="#c4102f" /><polygon points="541.7,236.7 598.6,197.9 600.8,243.0 609.0,248.5 615.0,298.6 585.7,317.1 585.7,328.6 557.1,345.0 566.4,335.7 565.8,324.9 560.8,282.9 546.2,269.6 543.3,259.9" fill="url(#pFront)" /><polygon points="546.0,263.0 578.5,243.5 609.3,252.9 580.5,274.0" fill="#c4102f" /><polygon points="546.0,263.0 578.5,243.5 609.3,252.9 580.5,274.0" fill="url(#pTop)" /><polygon points="443.3,184.2 512.0,254.2 515.4,283.3 515.8,285.8 502.5,272.9 500.4,257.1 459.2,215.0 456.7,216.2 450.8,219.2 446.5,213.0 445.8,201.7 445.0,198.7" fill="#343337" /><polygon points="443.3,184.2 512.0,254.2 515.4,283.3 515.8,285.8 502.5,272.9 500.4,257.1 459.2,215.0 456.7,216.2 450.8,219.2 446.5,213.0 445.8,201.7 445.0,198.7" fill="url(#pDark)" /><polygon points="416.2,215.4 429.6,229.2 429.6,232.5 419.6,238.3" fill="#343337" /><polygon points="416.2,215.4 429.6,229.2 429.6,232.5 419.6,238.3" fill="url(#pDark)" /><polygon points="419.2,238.3 460.4,280.8 470.0,339.9 474.2,357.5 457.1,339.9 434.6,315.4 425.8,270.0" fill="#343337" /><polygon points="419.2,238.3 460.4,280.8 470.0,339.9 474.2,357.5 457.1,339.9 434.6,315.4 425.8,270.0" fill="url(#pDark)" /><polygon points="482.9,284.6 511.2,313.3 518.2,359.3 500.0,342.1 491.7,333.3" fill="#343337" /><polygon points="482.9,284.6 511.2,313.3 518.2,359.3 500.0,342.1 491.7,333.3" fill="url(#pDark)" /><polygon points="522.9,356.4 528.6,362.9 524.0,361.0" fill="#343337" /><polygon points="522.9,356.4 528.6,362.9 524.0,361.0" fill="url(#pDark)" /><polygon points="857.0,196.6 857.0,204.6 880.7,190.0 880.7,182.0" fill="#66636a" stroke="#66636a" stroke-width="0.5" stroke-linejoin="round"/><polygon points="880.7,182.0 880.7,190.0 911.4,216.8 916.6,213.3" fill="#3c3b3f" stroke="#3c3b3f" stroke-width="0.5" stroke-linejoin="round"/><polygon points="835.0,196.3 880.0,168.0 933.8,214.1 888.0,243.0 873.0,230.3 881.3,225.0 890.3,230.7 916.6,213.3 880.7,182.0 857.0,196.6 858.7,203.3 849.7,208.7" fill="#66636a" stroke="#66636a" stroke-width="0.5" stroke-linejoin="round"/><polygon points="835.0,196.3 835.0,204.3 849.7,216.7 849.7,208.7" fill="#3c3b3f" stroke="#3c3b3f" stroke-width="0.5" stroke-linejoin="round"/><polygon points="849.7,208.7 849.7,216.7 858.7,211.3 858.7,203.3" fill="#66636a" stroke="#66636a" stroke-width="0.5" stroke-linejoin="round"/><polygon points="873.0,230.3 873.0,238.3 888.0,251.0 888.0,243.0" fill="#3c3b3f" stroke="#3c3b3f" stroke-width="0.5" stroke-linejoin="round"/><polygon points="888.0,243.0 888.0,251.0 933.8,222.1 933.8,214.1" fill="#66636a" stroke="#66636a" stroke-width="0.5" stroke-linejoin="round"/><g clip-path="url(#c_TR_0)"><polygon points="857.0,196.6 857.0,204.6 880.7,190.0 880.7,182.0" fill="#c8102e" stroke="#c8102e" stroke-width="0.5" stroke-linejoin="round"/><polygon points="880.7,182.0 880.7,190.0 911.4,216.8 916.6,213.3" fill="#6e0a18" stroke="#6e0a18" stroke-width="0.5" stroke-linejoin="round"/><polygon points="835.0,196.3 880.0,168.0 933.8,214.1 888.0,243.0 873.0,230.3 881.3,225.0 890.3,230.7 916.6,213.3 880.7,182.0 857.0,196.6 858.7,203.3 849.7,208.7" fill="#c8102e" stroke="#c8102e" stroke-width="0.5" stroke-linejoin="round"/><polygon points="835.0,196.3 835.0,204.3 849.7,216.7 849.7,208.7" fill="#6e0a18" stroke="#6e0a18" stroke-width="0.5" stroke-linejoin="round"/><polygon points="849.7,208.7 849.7,216.7 858.7,211.3 858.7,203.3" fill="#c8102e" stroke="#c8102e" stroke-width="0.5" stroke-linejoin="round"/><polygon points="873.0,230.3 873.0,238.3 888.0,251.0 888.0,243.0" fill="#6e0a18" stroke="#6e0a18" stroke-width="0.5" stroke-linejoin="round"/><polygon points="888.0,243.0 888.0,251.0 933.8,222.1 933.8,214.1" fill="#c8102e" stroke="#c8102e" stroke-width="0.5" stroke-linejoin="round"/></g><polygon points="835.0,196.3 880.0,168.0 933.8,214.1 888.0,243.0 873.0,230.3 881.3,225.0 890.3,230.7 916.6,213.3 880.7,182.0 857.0,196.6 858.7,203.3 849.7,208.7" fill="url(#d_TR)" /><polygon points="849.7,208.7 849.7,216.7 858.7,211.3 858.7,203.3" fill="url(#d_TR)" /><polygon points="888.0,243.0 888.0,251.0 933.8,222.1 933.8,214.1" fill="url(#d_TR)" /><polygon points="857.0,196.6 857.0,204.6 880.7,190.0 880.7,182.0" fill="url(#d_TR)" /><polygon points="860.7,184.0 868.1,189.0 868.0,205.7 860.3,198.7" fill="#0000a8" stroke="#0000a8" stroke-width="0.5" stroke-linejoin="round"/><polygon points="868.1,189.0 876.7,183.3 876.7,200.3 868.0,205.7" fill="#0a0ae0" stroke="#0a0ae0" stroke-width="0.5" stroke-linejoin="round"/><polygon points="860.7,184.0 869.3,178.3 876.7,183.3 868.1,189.0" fill="#2424ff" stroke="#2424ff" stroke-width="0.5" stroke-linejoin="round"/><polygon points="437.4,407.0 437.4,413.3 462.7,398.1 462.7,391.8" fill="#66636a" stroke="#66636a" stroke-width="0.5" stroke-linejoin="round"/><polygon points="462.7,391.8 462.7,398.1 491.2,429.1 494.9,426.7" fill="#3c3b3f" stroke="#3c3b3f" stroke-width="0.5" stroke-linejoin="round"/><polygon points="415.4,406.0 463.5,376.3 511.7,428.1 463.5,456.9 450.1,443.3 458.8,438.0 467.0,444.2 494.9,426.7 462.7,391.8 437.4,407.0 438.5,414.3 429.1,419.8" fill="#66636a" stroke="#66636a" stroke-width="0.5" stroke-linejoin="round"/><polygon points="415.4,406.0 415.4,412.3 429.1,426.1 429.1,419.8" fill="#3c3b3f" stroke="#3c3b3f" stroke-width="0.5" stroke-linejoin="round"/><polygon points="429.1,419.8 429.1,426.1 438.5,420.6 438.5,414.3" fill="#66636a" stroke="#66636a" stroke-width="0.5" stroke-linejoin="round"/><polygon points="450.1,443.3 450.1,449.6 463.5,463.2 463.5,456.9" fill="#3c3b3f" stroke="#3c3b3f" stroke-width="0.5" stroke-linejoin="round"/><polygon points="463.5,456.9 463.5,463.2 511.7,434.4 511.7,428.1" fill="#66636a" stroke="#66636a" stroke-width="0.5" stroke-linejoin="round"/><g clip-path="url(#c_S1_0)"><polygon points="437.4,407.0 437.4,413.3 462.7,398.1 462.7,391.8" fill="#c8102e" stroke="#c8102e" stroke-width="0.5" stroke-linejoin="round"/><polygon points="462.7,391.8 462.7,398.1 491.2,429.1 494.9,426.7" fill="#6e0a18" stroke="#6e0a18" stroke-width="0.5" stroke-linejoin="round"/><polygon points="415.4,406.0 463.5,376.3 511.7,428.1 463.5,456.9 450.1,443.3 458.8,438.0 467.0,444.2 494.9,426.7 462.7,391.8 437.4,407.0 438.5,414.3 429.1,419.8" fill="#c8102e" stroke="#c8102e" stroke-width="0.5" stroke-linejoin="round"/><polygon points="415.4,406.0 415.4,412.3 429.1,426.1 429.1,419.8" fill="#6e0a18" stroke="#6e0a18" stroke-width="0.5" stroke-linejoin="round"/><polygon points="429.1,419.8 429.1,426.1 438.5,420.6 438.5,414.3" fill="#c8102e" stroke="#c8102e" stroke-width="0.5" stroke-linejoin="round"/><polygon points="450.1,443.3 450.1,449.6 463.5,463.2 463.5,456.9" fill="#6e0a18" stroke="#6e0a18" stroke-width="0.5" stroke-linejoin="round"/><polygon points="463.5,456.9 463.5,463.2 511.7,434.4 511.7,428.1" fill="#c8102e" stroke="#c8102e" stroke-width="0.5" stroke-linejoin="round"/></g><polygon points="415.4,406.0 463.5,376.3 511.7,428.1 463.5,456.9 450.1,443.3 458.8,438.0 467.0,444.2 494.9,426.7 462.7,391.8 437.4,407.0 438.5,414.3 429.1,419.8" fill="url(#d_S1)" /><polygon points="429.1,419.8 429.1,426.1 438.5,420.6 438.5,414.3" fill="url(#d_S1)" /><polygon points="463.5,456.9 463.5,463.2 511.7,434.4 511.7,428.1" fill="url(#d_S1)" /><polygon points="437.4,407.0 437.4,413.3 462.7,398.1 462.7,391.8" fill="url(#d_S1)" /><polygon points="440.3,393.3 447.3,397.7 450.0,414.7 442.0,408.3" fill="#0000a8" stroke="#0000a8" stroke-width="0.5" stroke-linejoin="round"/><polygon points="447.3,397.7 456.3,392.7 456.5,409.3 450.0,414.7" fill="#0a0ae0" stroke="#0a0ae0" stroke-width="0.5" stroke-linejoin="round"/><polygon points="440.3,393.3 449.3,388.3 456.3,392.7 447.3,397.7" fill="#2424ff" stroke="#2424ff" stroke-width="0.5" stroke-linejoin="round"/><polygon points="542.0,406.6 542.0,412.9 566.4,397.6 566.4,391.3" fill="#c8102e" stroke="#c8102e" stroke-width="0.5" stroke-linejoin="round"/><polygon points="566.4,391.3 566.4,397.6 595.9,427.8 599.7,425.3" fill="#6e0a18" stroke="#6e0a18" stroke-width="0.5" stroke-linejoin="round"/><polygon points="520.4,406.0 566.8,376.3 616.7,426.4 569.1,456.3 555.3,442.6 563.8,437.1 572.3,443.3 599.7,425.3 566.4,391.3 542.0,406.6 543.2,413.8 534.0,419.4" fill="#c8102e" stroke="#c8102e" stroke-width="0.5" stroke-linejoin="round"/><polygon points="520.4,406.0 520.4,412.3 534.0,425.7 534.0,419.4" fill="#6e0a18" stroke="#6e0a18" stroke-width="0.5" stroke-linejoin="round"/><polygon points="534.0,419.4 534.0,425.7 543.2,420.1 543.2,413.8" fill="#c8102e" stroke="#c8102e" stroke-width="0.5" stroke-linejoin="round"/><polygon points="555.3,442.6 555.3,448.9 569.1,462.6 569.1,456.3" fill="#6e0a18" stroke="#6e0a18" stroke-width="0.5" stroke-linejoin="round"/><polygon points="569.1,456.3 569.1,462.6 616.7,432.7 616.7,426.4" fill="#c8102e" stroke="#c8102e" stroke-width="0.5" stroke-linejoin="round"/><g clip-path="url(#c_S2_0)"><polygon points="542.0,406.6 542.0,412.9 566.4,397.6 566.4,391.3" fill="#c8102e" stroke="#c8102e" stroke-width="0.5" stroke-linejoin="round"/><polygon points="566.4,391.3 566.4,397.6 595.9,427.8 599.7,425.3" fill="#6e0a18" stroke="#6e0a18" stroke-width="0.5" stroke-linejoin="round"/><polygon points="520.4,406.0 566.8,376.3 616.7,426.4 569.1,456.3 555.3,442.6 563.8,437.1 572.3,443.3 599.7,425.3 566.4,391.3 542.0,406.6 543.2,413.8 534.0,419.4" fill="#c8102e" stroke="#c8102e" stroke-width="0.5" stroke-linejoin="round"/><polygon points="520.4,406.0 520.4,412.3 534.0,425.7 534.0,419.4" fill="#6e0a18" stroke="#6e0a18" stroke-width="0.5" stroke-linejoin="round"/><polygon points="534.0,419.4 534.0,425.7 543.2,420.1 543.2,413.8" fill="#c8102e" stroke="#c8102e" stroke-width="0.5" stroke-linejoin="round"/><polygon points="555.3,442.6 555.3,448.9 569.1,462.6 569.1,456.3" fill="#6e0a18" stroke="#6e0a18" stroke-width="0.5" stroke-linejoin="round"/><polygon points="569.1,456.3 569.1,462.6 616.7,432.7 616.7,426.4" fill="#c8102e" stroke="#c8102e" stroke-width="0.5" stroke-linejoin="round"/><polygon points="542.0,410.1 542.0,412.9 566.4,397.6 566.4,394.8" fill="#66636a" stroke="#66636a" stroke-width="0.5" stroke-linejoin="round"/><polygon points="566.4,394.8 566.4,397.6 595.9,427.8 597.6,426.6" fill="#3c3b3f" stroke="#3c3b3f" stroke-width="0.5" stroke-linejoin="round"/><polygon points="520.4,409.5 520.4,412.3 534.0,425.7 534.0,422.8" fill="#3c3b3f" stroke="#3c3b3f" stroke-width="0.5" stroke-linejoin="round"/><polygon points="534.0,422.8 534.0,425.7 543.2,420.1 543.2,417.2" fill="#66636a" stroke="#66636a" stroke-width="0.5" stroke-linejoin="round"/><polygon points="555.3,446.1 555.3,448.9 569.1,462.6 569.1,459.8" fill="#3c3b3f" stroke="#3c3b3f" stroke-width="0.5" stroke-linejoin="round"/><polygon points="569.1,459.8 569.1,462.6 616.7,432.7 616.7,429.9" fill="#66636a" stroke="#66636a" stroke-width="0.5" stroke-linejoin="round"/></g><polygon points="520.4,406.0 566.8,376.3 616.7,426.4 569.1,456.3 555.3,442.6 563.8,437.1 572.3,443.3 599.7,425.3 566.4,391.3 542.0,406.6 543.2,413.8 534.0,419.4" fill="url(#d_S2)" /><polygon points="534.0,419.4 534.0,425.7 543.2,420.1 543.2,413.8" fill="url(#d_S2)" /><polygon points="569.1,456.3 569.1,462.6 616.7,432.7 616.7,426.4" fill="url(#d_S2)" /><polygon points="542.0,406.6 542.0,412.9 566.4,397.6 566.4,391.3" fill="url(#d_S2)" /><polygon points="555.5,387.9 564.6,392.4 564.0,408.8 556.1,402.0" fill="#0e9a0e" stroke="#0e9a0e" stroke-width="0.5" stroke-linejoin="round"/><polygon points="564.6,392.4 572.5,387.3 573.0,404.8 564.0,408.8" fill="#22c822" stroke="#22c822" stroke-width="0.5" stroke-linejoin="round"/><polygon points="555.5,387.9 563.4,382.8 572.5,387.3 564.6,392.4" fill="#33e033" stroke="#33e033" stroke-width="0.5" stroke-linejoin="round"/><polygon points="647.0,406.9 647.0,413.2 671.4,398.0 671.4,391.7" fill="#c8102e" stroke="#c8102e" stroke-width="0.5" stroke-linejoin="round"/><polygon points="671.4,391.7 671.4,398.0 701.7,429.1 705.5,426.7" fill="#6e0a18" stroke="#6e0a18" stroke-width="0.5" stroke-linejoin="round"/><polygon points="625.4,406.0 671.5,376.3 722.8,428.1 675.2,456.9 661.2,443.1 669.6,437.9 678.2,444.2 705.5,426.7 671.4,391.7 647.0,406.9 648.4,414.2 639.3,419.6" fill="#c8102e" stroke="#c8102e" stroke-width="0.5" stroke-linejoin="round"/><polygon points="625.4,406.0 625.4,412.3 639.3,425.9 639.3,419.6" fill="#6e0a18" stroke="#6e0a18" stroke-width="0.5" stroke-linejoin="round"/><polygon points="639.3,419.6 639.3,425.9 648.4,420.5 648.4,414.2" fill="#c8102e" stroke="#c8102e" stroke-width="0.5" stroke-linejoin="round"/><polygon points="661.2,443.1 661.2,449.4 675.2,463.2 675.2,456.9" fill="#6e0a18" stroke="#6e0a18" stroke-width="0.5" stroke-linejoin="round"/><polygon points="675.2,456.9 675.2,463.2 722.8,434.4 722.8,428.1" fill="#c8102e" stroke="#c8102e" stroke-width="0.5" stroke-linejoin="round"/><polygon points="625.4,406.0 671.5,376.3 722.8,428.1 675.2,456.9 661.2,443.1 669.6,437.9 678.2,444.2 705.5,426.7 671.4,391.7 647.0,406.9 648.4,414.2 639.3,419.6" fill="url(#d_S3)" /><polygon points="639.3,419.6 639.3,425.9 648.4,420.5 648.4,414.2" fill="url(#d_S3)" /><polygon points="675.2,456.9 675.2,463.2 722.8,434.4 722.8,428.1" fill="url(#d_S3)" /><polygon points="647.0,406.9 647.0,413.2 671.4,398.0 671.4,391.7" fill="url(#d_S3)" /><polygon points="667.3,395.2 675.8,400.2 675.2,415.6 667.9,409.4" fill="#9a0c0c" stroke="#9a0c0c" stroke-width="0.5" stroke-linejoin="round"/><polygon points="675.8,400.2 683.7,394.6 684.3,409.9 675.2,415.6" fill="#c81010" stroke="#c81010" stroke-width="0.5" stroke-linejoin="round"/><polygon points="667.3,395.2 675.2,389.6 683.7,394.6 675.8,400.2" fill="#e41616" stroke="#e41616" stroke-width="0.5" stroke-linejoin="round"/><polygon points="752.3,406.9 752.3,413.2 776.2,398.2 776.2,391.9" fill="#c8102e" stroke="#c8102e" stroke-width="0.5" stroke-linejoin="round"/><polygon points="776.2,391.9 776.2,398.2 807.3,428.8 811.1,426.3" fill="#6e0a18" stroke="#6e0a18" stroke-width="0.5" stroke-linejoin="round"/><polygon points="730.2,406.0 775.7,376.8 827.8,427.5 782.5,456.9 767.9,443.2 776.2,437.8 785.0,444.0 811.1,426.3 776.2,391.9 752.3,406.9 754.0,414.2 744.9,419.7" fill="#c8102e" stroke="#c8102e" stroke-width="0.5" stroke-linejoin="round"/><polygon points="730.2,406.0 730.2,412.3 744.9,426.0 744.9,419.7" fill="#6e0a18" stroke="#6e0a18" stroke-width="0.5" stroke-linejoin="round"/><polygon points="744.9,419.7 744.9,426.0 754.0,420.5 754.0,414.2" fill="#c8102e" stroke="#c8102e" stroke-width="0.5" stroke-linejoin="round"/><polygon points="767.9,443.2 767.9,449.5 782.5,463.2 782.5,456.9" fill="#6e0a18" stroke="#6e0a18" stroke-width="0.5" stroke-linejoin="round"/><polygon points="782.5,456.9 782.5,463.2 827.8,433.8 827.8,427.5" fill="#c8102e" stroke="#c8102e" stroke-width="0.5" stroke-linejoin="round"/><g clip-path="url(#c_S4_0)"><polygon points="752.3,406.9 752.3,413.2 776.2,398.2 776.2,391.9" fill="#66636a" stroke="#66636a" stroke-width="0.5" stroke-linejoin="round"/><polygon points="776.2,391.9 776.2,398.2 807.3,428.8 811.1,426.3" fill="#3c3b3f" stroke="#3c3b3f" stroke-width="0.5" stroke-linejoin="round"/><polygon points="730.2,406.0 775.7,376.8 827.8,427.5 782.5,456.9 767.9,443.2 776.2,437.8 785.0,444.0 811.1,426.3 776.2,391.9 752.3,406.9 754.0,414.2 744.9,419.7" fill="#66636a" stroke="#66636a" stroke-width="0.5" stroke-linejoin="round"/><polygon points="730.2,406.0 730.2,412.3 744.9,426.0 744.9,419.7" fill="#3c3b3f" stroke="#3c3b3f" stroke-width="0.5" stroke-linejoin="round"/><polygon points="744.9,419.7 744.9,426.0 754.0,420.5 754.0,414.2" fill="#66636a" stroke="#66636a" stroke-width="0.5" stroke-linejoin="round"/><polygon points="767.9,443.2 767.9,449.5 782.5,463.2 782.5,456.9" fill="#3c3b3f" stroke="#3c3b3f" stroke-width="0.5" stroke-linejoin="round"/><polygon points="782.5,456.9 782.5,463.2 827.8,433.8 827.8,427.5" fill="#66636a" stroke="#66636a" stroke-width="0.5" stroke-linejoin="round"/></g><polygon points="730.2,406.0 775.7,376.8 827.8,427.5 782.5,456.9 767.9,443.2 776.2,437.8 785.0,444.0 811.1,426.3 776.2,391.9 752.3,406.9 754.0,414.2 744.9,419.7" fill="url(#d_S4)" /><polygon points="744.9,419.7 744.9,426.0 754.0,420.5 754.0,414.2" fill="url(#d_S4)" /><polygon points="782.5,456.9 782.5,463.2 827.8,433.8 827.8,427.5" fill="url(#d_S4)" /><polygon points="752.3,406.9 752.3,413.2 776.2,398.2 776.2,391.9" fill="url(#d_S4)" /><polygon points="780.2,402.6 788.1,407.7 787.6,423.5 780.2,416.7" fill="#0e9a9a" stroke="#0e9a9a" stroke-width="0.5" stroke-linejoin="round"/><polygon points="788.1,407.7 796.1,402.0 796.6,417.3 787.6,423.5" fill="#22c8c8" stroke="#22c8c8" stroke-width="0.5" stroke-linejoin="round"/><polygon points="780.2,402.6 788.2,396.9 796.1,402.0 788.1,407.7" fill="#36dede" stroke="#36dede" stroke-width="0.5" stroke-linejoin="round"/><polygon points="856.8,406.4 856.8,412.7 880.2,397.7 880.2,391.4" fill="#c8102e" stroke="#c8102e" stroke-width="0.5" stroke-linejoin="round"/><polygon points="880.2,391.4 880.2,397.7 912.7,427.9 916.6,425.1" fill="#6e0a18" stroke="#6e0a18" stroke-width="0.5" stroke-linejoin="round"/><polygon points="835.0,405.7 879.4,376.9 933.9,426.3 888.2,456.9 872.9,442.7 881.2,437.1 890.4,443.5 916.6,425.1 880.2,391.4 856.8,406.4 858.5,413.5 849.5,419.1" fill="#c8102e" stroke="#c8102e" stroke-width="0.5" stroke-linejoin="round"/><polygon points="835.0,405.7 835.0,412.0 849.5,425.4 849.5,419.1" fill="#6e0a18" stroke="#6e0a18" stroke-width="0.5" stroke-linejoin="round"/><polygon points="849.5,419.1 849.5,425.4 858.5,419.8 858.5,413.5" fill="#c8102e" stroke="#c8102e" stroke-width="0.5" stroke-linejoin="round"/><polygon points="872.9,442.7 872.9,449.0 888.2,463.2 888.2,456.9" fill="#6e0a18" stroke="#6e0a18" stroke-width="0.5" stroke-linejoin="round"/><polygon points="888.2,456.9 888.2,463.2 933.9,432.6 933.9,426.3" fill="#c8102e" stroke="#c8102e" stroke-width="0.5" stroke-linejoin="round"/><g clip-path="url(#c_S5_0)"><polygon points="856.8,406.4 856.8,412.7 880.2,397.7 880.2,391.4" fill="#66636a" stroke="#66636a" stroke-width="0.5" stroke-linejoin="round"/><polygon points="880.2,391.4 880.2,397.7 912.7,427.9 916.6,425.1" fill="#3c3b3f" stroke="#3c3b3f" stroke-width="0.5" stroke-linejoin="round"/><polygon points="835.0,405.7 879.4,376.9 933.9,426.3 888.2,456.9 872.9,442.7 881.2,437.1 890.4,443.5 916.6,425.1 880.2,391.4 856.8,406.4 858.5,413.5 849.5,419.1" fill="#66636a" stroke="#66636a" stroke-width="0.5" stroke-linejoin="round"/><polygon points="835.0,405.7 835.0,412.0 849.5,425.4 849.5,419.1" fill="#3c3b3f" stroke="#3c3b3f" stroke-width="0.5" stroke-linejoin="round"/><polygon points="849.5,419.1 849.5,425.4 858.5,419.8 858.5,413.5" fill="#66636a" stroke="#66636a" stroke-width="0.5" stroke-linejoin="round"/><polygon points="872.9,442.7 872.9,449.0 888.2,463.2 888.2,456.9" fill="#3c3b3f" stroke="#3c3b3f" stroke-width="0.5" stroke-linejoin="round"/><polygon points="888.2,456.9 888.2,463.2 933.9,432.6 933.9,426.3" fill="#66636a" stroke="#66636a" stroke-width="0.5" stroke-linejoin="round"/></g><polygon points="835.0,405.7 879.4,376.9 933.9,426.3 888.2,456.9 872.9,442.7 881.2,437.1 890.4,443.5 916.6,425.1 880.2,391.4 856.8,406.4 858.5,413.5 849.5,419.1" fill="url(#d_S5)" /><polygon points="849.5,419.1 849.5,425.4 858.5,419.8 858.5,413.5" fill="url(#d_S5)" /><polygon points="888.2,456.9 888.2,463.2 933.9,432.6 933.9,426.3" fill="url(#d_S5)" /><polygon points="856.8,406.4 856.8,412.7 880.2,397.7 880.2,391.4" fill="url(#d_S5)" /><polygon points="893.2,408.8 900.7,413.8 900.7,430.1 893.2,423.8" fill="#a0a00e" stroke="#a0a00e" stroke-width="0.5" stroke-linejoin="round"/><polygon points="900.7,413.8 908.8,409.4 908.8,425.1 900.7,430.1" fill="#d0d022" stroke="#d0d022" stroke-width="0.5" stroke-linejoin="round"/><polygon points="893.2,408.8 901.3,404.4 908.8,409.4 900.7,413.8" fill="#eaea36" stroke="#eaea36" stroke-width="0.5" stroke-linejoin="round"/><polygon points="437.4,512.4 437.4,518.0 462.7,502.5 462.7,496.9" fill="#c8102e" stroke="#c8102e" stroke-width="0.5" stroke-linejoin="round"/><polygon points="462.7,496.9 462.7,502.5 491.6,535.6 494.8,533.6" fill="#6e0a18" stroke="#6e0a18" stroke-width="0.5" stroke-linejoin="round"/><polygon points="415.4,511.0 463.5,480.4 511.7,535.3 463.5,563.1 450.3,549.4 458.9,544.3 467.0,550.7 494.8,533.6 462.7,496.9 437.4,512.4 438.6,519.9 429.3,525.4" fill="#c8102e" stroke="#c8102e" stroke-width="0.5" stroke-linejoin="round"/><polygon points="415.4,511.0 415.4,516.6 429.3,531.0 429.3,525.4" fill="#6e0a18" stroke="#6e0a18" stroke-width="0.5" stroke-linejoin="round"/><polygon points="429.3,525.4 429.3,531.0 438.6,525.5 438.6,519.9" fill="#c8102e" stroke="#c8102e" stroke-width="0.5" stroke-linejoin="round"/><polygon points="450.3,549.4 450.3,555.0 463.5,568.7 463.5,563.1" fill="#6e0a18" stroke="#6e0a18" stroke-width="0.5" stroke-linejoin="round"/><polygon points="463.5,563.1 463.5,568.7 511.7,540.9 511.7,535.3" fill="#c8102e" stroke="#c8102e" stroke-width="0.5" stroke-linejoin="round"/><g clip-path="url(#c_S6_0)"><polygon points="437.4,512.4 437.4,518.0 462.7,502.5 462.7,496.9" fill="#66636a" stroke="#66636a" stroke-width="0.5" stroke-linejoin="round"/><polygon points="462.7,496.9 462.7,502.5 491.6,535.6 494.8,533.6" fill="#3c3b3f" stroke="#3c3b3f" stroke-width="0.5" stroke-linejoin="round"/><polygon points="415.4,511.0 463.5,480.4 511.7,535.3 463.5,563.1 450.3,549.4 458.9,544.3 467.0,550.7 494.8,533.6 462.7,496.9 437.4,512.4 438.6,519.9 429.3,525.4" fill="#66636a" stroke="#66636a" stroke-width="0.5" stroke-linejoin="round"/><polygon points="415.4,511.0 415.4,516.6 429.3,531.0 429.3,525.4" fill="#3c3b3f" stroke="#3c3b3f" stroke-width="0.5" stroke-linejoin="round"/><polygon points="429.3,525.4 429.3,531.0 438.6,525.5 438.6,519.9" fill="#66636a" stroke="#66636a" stroke-width="0.5" stroke-linejoin="round"/><polygon points="450.3,549.4 450.3,555.0 463.5,568.7 463.5,563.1" fill="#3c3b3f" stroke="#3c3b3f" stroke-width="0.5" stroke-linejoin="round"/><polygon points="463.5,563.1 463.5,568.7 511.7,540.9 511.7,535.3" fill="#66636a" stroke="#66636a" stroke-width="0.5" stroke-linejoin="round"/></g><polygon points="415.4,511.0 463.5,480.4 511.7,535.3 463.5,563.1 450.3,549.4 458.9,544.3 467.0,550.7 494.8,533.6 462.7,496.9 437.4,512.4 438.6,519.9 429.3,525.4" fill="url(#d_S6)" /><polygon points="429.3,525.4 429.3,531.0 438.6,525.5 438.6,519.9" fill="url(#d_S6)" /><polygon points="463.5,563.1 463.5,568.7 511.7,540.9 511.7,535.3" fill="url(#d_S6)" /><polygon points="437.4,512.4 437.4,518.0 462.7,502.5 462.7,496.9" fill="url(#d_S6)" /><polygon points="477.7,521.7 485.6,526.8 485.6,535.9 478.8,531.4" fill="#9a0e9a" stroke="#9a0e9a" stroke-width="0.5" stroke-linejoin="round"/><polygon points="485.6,526.8 493.5,522.3 493.5,530.2 485.6,535.9" fill="#cc28cc" stroke="#cc28cc" stroke-width="0.5" stroke-linejoin="round"/><polygon points="477.7,521.7 485.6,517.2 493.5,522.3 485.6,526.8" fill="#e444e4" stroke="#e444e4" stroke-width="0.5" stroke-linejoin="round"/><polygon points="542.3,511.4 542.3,517.0 567.0,501.6 567.0,496.0" fill="#c8102e" stroke="#c8102e" stroke-width="0.5" stroke-linejoin="round"/><polygon points="567.0,496.0 567.0,501.6 597.0,533.8 600.3,531.7" fill="#6e0a18" stroke="#6e0a18" stroke-width="0.5" stroke-linejoin="round"/><polygon points="520.4,510.4 567.4,480.4 617.2,533.1 569.7,563.1 555.8,548.9 564.4,543.4 572.9,549.8 600.3,531.7 567.0,496.0 542.3,511.4 543.6,518.9 534.2,524.5" fill="#c8102e" stroke="#c8102e" stroke-width="0.5" stroke-linejoin="round"/><polygon points="520.4,510.4 520.4,516.0 534.2,530.1 534.2,524.5" fill="#6e0a18" stroke="#6e0a18" stroke-width="0.5" stroke-linejoin="round"/><polygon points="534.2,524.5 534.2,530.1 543.6,524.5 543.6,518.9" fill="#c8102e" stroke="#c8102e" stroke-width="0.5" stroke-linejoin="round"/><polygon points="555.8,548.9 555.8,554.5 569.7,568.7 569.7,563.1" fill="#6e0a18" stroke="#6e0a18" stroke-width="0.5" stroke-linejoin="round"/><polygon points="569.7,563.1 569.7,568.7 617.2,538.7 617.2,533.1" fill="#c8102e" stroke="#c8102e" stroke-width="0.5" stroke-linejoin="round"/><g clip-path="url(#c_S7_0)"><polygon points="542.3,511.4 542.3,517.0 567.0,501.6 567.0,496.0" fill="#66636a" stroke="#66636a" stroke-width="0.5" stroke-linejoin="round"/><polygon points="567.0,496.0 567.0,501.6 597.0,533.8 600.3,531.7" fill="#3c3b3f" stroke="#3c3b3f" stroke-width="0.5" stroke-linejoin="round"/><polygon points="520.4,510.4 567.4,480.4 617.2,533.1 569.7,563.1 555.8,548.9 564.4,543.4 572.9,549.8 600.3,531.7 567.0,496.0 542.3,511.4 543.6,518.9 534.2,524.5" fill="#66636a" stroke="#66636a" stroke-width="0.5" stroke-linejoin="round"/><polygon points="520.4,510.4 520.4,516.0 534.2,530.1 534.2,524.5" fill="#3c3b3f" stroke="#3c3b3f" stroke-width="0.5" stroke-linejoin="round"/><polygon points="534.2,524.5 534.2,530.1 543.6,524.5 543.6,518.9" fill="#66636a" stroke="#66636a" stroke-width="0.5" stroke-linejoin="round"/><polygon points="555.8,548.9 555.8,554.5 569.7,568.7 569.7,563.1" fill="#3c3b3f" stroke="#3c3b3f" stroke-width="0.5" stroke-linejoin="round"/><polygon points="569.7,563.1 569.7,568.7 617.2,538.7 617.2,533.1" fill="#66636a" stroke="#66636a" stroke-width="0.5" stroke-linejoin="round"/></g><polygon points="520.4,510.4 567.4,480.4 617.2,533.1 569.7,563.1 555.8,548.9 564.4,543.4 572.9,549.8 600.3,531.7 567.0,496.0 542.3,511.4 543.6,518.9 534.2,524.5" fill="url(#d_S7)" /><polygon points="534.2,524.5 534.2,530.1 543.6,524.5 543.6,518.9" fill="url(#d_S7)" /><polygon points="569.7,563.1 569.7,568.7 617.2,538.7 617.2,533.1" fill="url(#d_S7)" /><polygon points="542.3,511.4 542.3,517.0 567.0,501.6 567.0,496.0" fill="url(#d_S7)" /><polygon points="573.6,528.5 580.9,533.6 580.4,544.4 574.2,539.9" fill="#0a0a68" stroke="#0a0a68" stroke-width="0.5" stroke-linejoin="round"/><polygon points="580.9,533.6 588.9,528.5 589.5,538.7 580.4,544.4" fill="#121280" stroke="#121280" stroke-width="0.5" stroke-linejoin="round"/><polygon points="573.6,528.5 581.6,523.4 588.9,528.5 580.9,533.6" fill="#1c1c98" stroke="#1c1c98" stroke-width="0.5" stroke-linejoin="round"/><polygon points="646.9,511.3 646.9,516.9 671.2,501.8 671.2,496.2" fill="#66636a" stroke="#66636a" stroke-width="0.5" stroke-linejoin="round"/><polygon points="671.2,496.2 671.2,501.8 702.2,533.4 705.5,531.1" fill="#3c3b3f" stroke="#3c3b3f" stroke-width="0.5" stroke-linejoin="round"/><polygon points="625.2,510.4 671.3,481.3 722.8,532.5 675.2,563.7 660.7,548.9 669.4,543.2 678.2,549.8 705.5,531.1 671.2,496.2 646.9,511.3 648.2,518.6 638.8,524.3" fill="#66636a" stroke="#66636a" stroke-width="0.5" stroke-linejoin="round"/><polygon points="625.2,510.4 625.2,516.0 638.8,529.9 638.8,524.3" fill="#3c3b3f" stroke="#3c3b3f" stroke-width="0.5" stroke-linejoin="round"/><polygon points="638.8,524.3 638.8,529.9 648.2,524.2 648.2,518.6" fill="#66636a" stroke="#66636a" stroke-width="0.5" stroke-linejoin="round"/><polygon points="660.7,548.9 660.7,554.5 675.2,569.3 675.2,563.7" fill="#3c3b3f" stroke="#3c3b3f" stroke-width="0.5" stroke-linejoin="round"/><polygon points="675.2,563.7 675.2,569.3 722.8,538.1 722.8,532.5" fill="#66636a" stroke="#66636a" stroke-width="0.5" stroke-linejoin="round"/><g clip-path="url(#c_S8_0)"><polygon points="646.9,511.3 646.9,516.9 671.2,501.8 671.2,496.2" fill="#c8102e" stroke="#c8102e" stroke-width="0.5" stroke-linejoin="round"/><polygon points="671.2,496.2 671.2,501.8 702.2,533.4 705.5,531.1" fill="#6e0a18" stroke="#6e0a18" stroke-width="0.5" stroke-linejoin="round"/><polygon points="625.2,510.4 671.3,481.3 722.8,532.5 675.2,563.7 660.7,548.9 669.4,543.2 678.2,549.8 705.5,531.1 671.2,496.2 646.9,511.3 648.2,518.6 638.8,524.3" fill="#c8102e" stroke="#c8102e" stroke-width="0.5" stroke-linejoin="round"/><polygon points="625.2,510.4 625.2,516.0 638.8,529.9 638.8,524.3" fill="#6e0a18" stroke="#6e0a18" stroke-width="0.5" stroke-linejoin="round"/><polygon points="638.8,524.3 638.8,529.9 648.2,524.2 648.2,518.6" fill="#c8102e" stroke="#c8102e" stroke-width="0.5" stroke-linejoin="round"/><polygon points="660.7,548.9 660.7,554.5 675.2,569.3 675.2,563.7" fill="#6e0a18" stroke="#6e0a18" stroke-width="0.5" stroke-linejoin="round"/><polygon points="675.2,563.7 675.2,569.3 722.8,538.1 722.8,532.5" fill="#c8102e" stroke="#c8102e" stroke-width="0.5" stroke-linejoin="round"/></g><polygon points="625.2,510.4 671.3,481.3 722.8,532.5 675.2,563.7 660.7,548.9 669.4,543.2 678.2,549.8 705.5,531.1 671.2,496.2 646.9,511.3 648.2,518.6 638.8,524.3" fill="url(#d_S8)" /><polygon points="638.8,524.3 638.8,529.9 648.2,524.2 648.2,518.6" fill="url(#d_S8)" /><polygon points="675.2,563.7 675.2,569.3 722.8,538.1 722.8,532.5" fill="url(#d_S8)" /><polygon points="646.9,511.3 646.9,516.9 671.2,501.8 671.2,496.2" fill="url(#d_S8)" /><polygon points="752.2,511.8 752.2,517.4 776.1,502.0 776.1,496.4" fill="#66636a" stroke="#66636a" stroke-width="0.5" stroke-linejoin="round"/><polygon points="776.1,496.4 776.1,502.0 807.6,533.6 810.9,531.3" fill="#3c3b3f" stroke="#3c3b3f" stroke-width="0.5" stroke-linejoin="round"/><polygon points="730.2,511.0 775.7,481.3 827.8,532.5 781.9,563.7 767.2,549.3 775.6,543.6 784.5,550.0 810.9,531.3 776.1,496.4 752.2,511.8 753.7,519.2 744.5,524.9" fill="#66636a" stroke="#66636a" stroke-width="0.5" stroke-linejoin="round"/><polygon points="730.2,511.0 730.2,516.6 744.5,530.5 744.5,524.9" fill="#3c3b3f" stroke="#3c3b3f" stroke-width="0.5" stroke-linejoin="round"/><polygon points="744.5,524.9 744.5,530.5 753.7,524.8 753.7,519.2" fill="#66636a" stroke="#66636a" stroke-width="0.5" stroke-linejoin="round"/><polygon points="767.2,549.3 767.2,554.9 781.9,569.3 781.9,563.7" fill="#3c3b3f" stroke="#3c3b3f" stroke-width="0.5" stroke-linejoin="round"/><polygon points="781.9,563.7 781.9,569.3 827.8,538.1 827.8,532.5" fill="#66636a" stroke="#66636a" stroke-width="0.5" stroke-linejoin="round"/><polygon points="730.2,511.0 775.7,481.3 827.8,532.5 781.9,563.7 767.2,549.3 775.6,543.6 784.5,550.0 810.9,531.3 776.1,496.4 752.2,511.8 753.7,519.2 744.5,524.9" fill="url(#d_S9)" /><polygon points="744.5,524.9 744.5,530.5 753.7,524.8 753.7,519.2" fill="url(#d_S9)" /><polygon points="781.9,563.7 781.9,569.3 827.8,538.1 827.8,532.5" fill="url(#d_S9)" /><polygon points="752.2,511.8 752.2,517.4 776.1,502.0 776.1,496.4" fill="url(#d_S9)" /></svg></body></html>
